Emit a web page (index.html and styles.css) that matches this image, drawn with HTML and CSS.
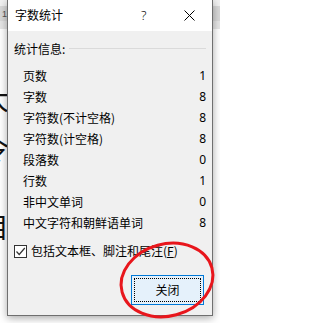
FILE: index.html
```html
<!DOCTYPE html>
<html lang="zh-CN">
<head>
<meta charset="utf-8">
<title>字数统计</title>
<link rel="stylesheet" href="styles.css">
</head>
<body>
<div class="app">
  <div class="ribbon">
    <div class="band band-a"></div>
    <div class="band band-b"><span class="ruler-num">1</span></div>
    <div class="band band-c"></div>
  </div>
  <div class="doc">
    <div class="doc-line l1"><span>大</span></div>
    <div class="doc-line l2"><span>令</span></div>
    <div class="doc-line l3"><span>目</span></div>
  </div>

  <div class="dialog">
    <div class="titlebar">
      <span class="title">字数统计</span>
      <span class="help">?</span>
      <svg class="close" width="11" height="11" viewBox="0 0 11 11"><path d="M0.5 0.5 L10.5 10.5 M10.5 0.5 L0.5 10.5" stroke="#000" stroke-width="1" fill="none"/></svg>
    </div>
    <div class="content">
      <div class="group-head">
        <span>统计信息:</span>
        <span class="rule"></span>
      </div>
      <div class="stats">
        <div class="row"><span>页数</span><span class="num">1</span></div>
        <div class="row"><span>字数</span><span class="num">8</span></div>
        <div class="row"><span>字符数(不计空格)</span><span class="num">8</span></div>
        <div class="row"><span>字符数(计空格)</span><span class="num">8</span></div>
        <div class="row"><span>段落数</span><span class="num">0</span></div>
        <div class="row"><span>行数</span><span class="num">1</span></div>
        <div class="row"><span>非中文单词</span><span class="num">0</span></div>
        <div class="row"><span>中文字符和朝鲜语单词</span><span class="num">8</span></div>
      </div>
      <label class="check">
        <span class="box"><svg width="11" height="11" viewBox="0 0 11 11"><path d="M1.5 5.5 L4.2 8.5 L9.8 2" stroke="#333" stroke-width="1.2" fill="none"/></svg></span>
        <span class="check-label">包括文本框、脚注和尾注(<u>F</u>)</span>
      </label>
      <div class="actions">
        <button class="btn"><span class="focus">关闭</span></button>
      </div>
    </div>
  </div>

  <svg class="mark" width="220" height="323" viewBox="0 0 220 323">
    <ellipse cx="167" cy="280" rx="46.5" ry="36" transform="rotate(-15 167 280)" fill="none" stroke="#e8161c" stroke-width="3"/>
  </svg>
</div>
</body>
</html>
```

FILE: styles.css
```css
* { box-sizing: border-box; }
html, body { margin: 0; padding: 0; }
body {
  width: 220px;
  height: 323px;
  overflow: hidden;
  background: #ffffff;
  font-family: "Noto Sans CJK SC", "Noto Sans", sans-serif;
  font-size: 12px;
  color: #000;
}
.app {
  position: relative;
  width: 220px;
  height: 323px;
  overflow: hidden;
}
.ribbon { display: flex; flex-direction: column; }
.band-a { height: 6px; background: #f1f1f1; }
.band-b { height: 15px; background: #d9d9d9; display: flex; align-items: center; padding-left: 2px; }
.band-c { height: 8px; background: #e6e6e6; }
.ruler-num { font-family: "Liberation Sans", sans-serif; font-size: 9px; color: #555; }

.doc { display: flex; flex-direction: column; width: 9px; }
.doc-line {
  display: flex;
  justify-content: flex-end;
  width: 9px;
  font-family: "Noto Sans CJK SC", sans-serif;
  font-size: 28px;
  line-height: 28px;
  white-space: nowrap;
  color: #111;
}
.l1 { margin-top: 55px; }
.l2 { margin-top: 22px; }
.l3 { margin-top: 50px; }

.dialog {
  position: absolute;
  left: 7px;
  top: 0;
  width: 206px;
  height: 316px;
  border: 1px solid #6f6f6f;
  border-top: 0;
  background: #f0f0f0;
  box-shadow: 0 2px 8px rgba(0, 0, 0, 0.35);
  display: flex;
  flex-direction: column;
}
.titlebar {
  height: 31px;
  background: #ffffff;
  display: flex;
  align-items: center;
  padding-left: 7px;
  padding-right: 17px;
  padding-bottom: 1px;
}
.title { flex: 1; font-size: 12px; line-height: 16px; }
.help {
  font-family: "Noto Sans", sans-serif;
  font-weight: 300;
  font-size: 13px;
  line-height: 16px;
  width: 7px;
  margin-right: 36px;
}
.close { display: block; }

.content {
  flex: 1;
  display: flex;
  flex-direction: column;
  padding: 10px 6px 0 6px;
}
.group-head {
  display: flex;
  align-items: center;
  line-height: 16px;
  height: 16px;
}
.rule { flex: 1; height: 1px; background: #dadada; margin-left: 4px; margin-top: -1px; }

.stats {
  margin-top: 8px;
  padding-left: 9px;
  display: flex;
  flex-direction: column;
}
.row {
  display: flex;
  justify-content: space-between;
  align-items: center;
  height: 21px;
  line-height: 16px;
}
.num { font-family: "Noto Sans", "Liberation Sans", sans-serif; font-size: 12px; }

.check {
  margin-top: 10px;
  display: flex;
  align-items: center;
  height: 16px;
}
.box {
  width: 13px;
  height: 13px;
  border: 1px solid #333;
  background: #fff;
  display: flex;
  align-items: center;
  justify-content: center;
  margin-right: 4px;
}
.box svg { display: block; }
.check-label { line-height: 16px; white-space: nowrap; }
.check-label u { text-decoration: underline; text-underline-offset: 1px; }

.actions {
  margin-top: 16px;
  display: flex;
  justify-content: flex-end;
  padding-right: 2px;
}
.btn {
  width: 73px;
  height: 30px;
  border: 1px solid #0078d7;
  background: #e5f1fb;
  padding: 2px;
  margin: 0;
  font-family: "Noto Sans CJK SC", sans-serif;
  font-size: 12px;
  color: #000;
  display: flex;
}
.focus {
  flex: 1;
  border: 1px dotted #000;
  display: flex;
  align-items: center;
  justify-content: center;
  line-height: 16px;
}

.mark {
  position: absolute;
  left: 0;
  top: 0;
  pointer-events: none;
}
```
